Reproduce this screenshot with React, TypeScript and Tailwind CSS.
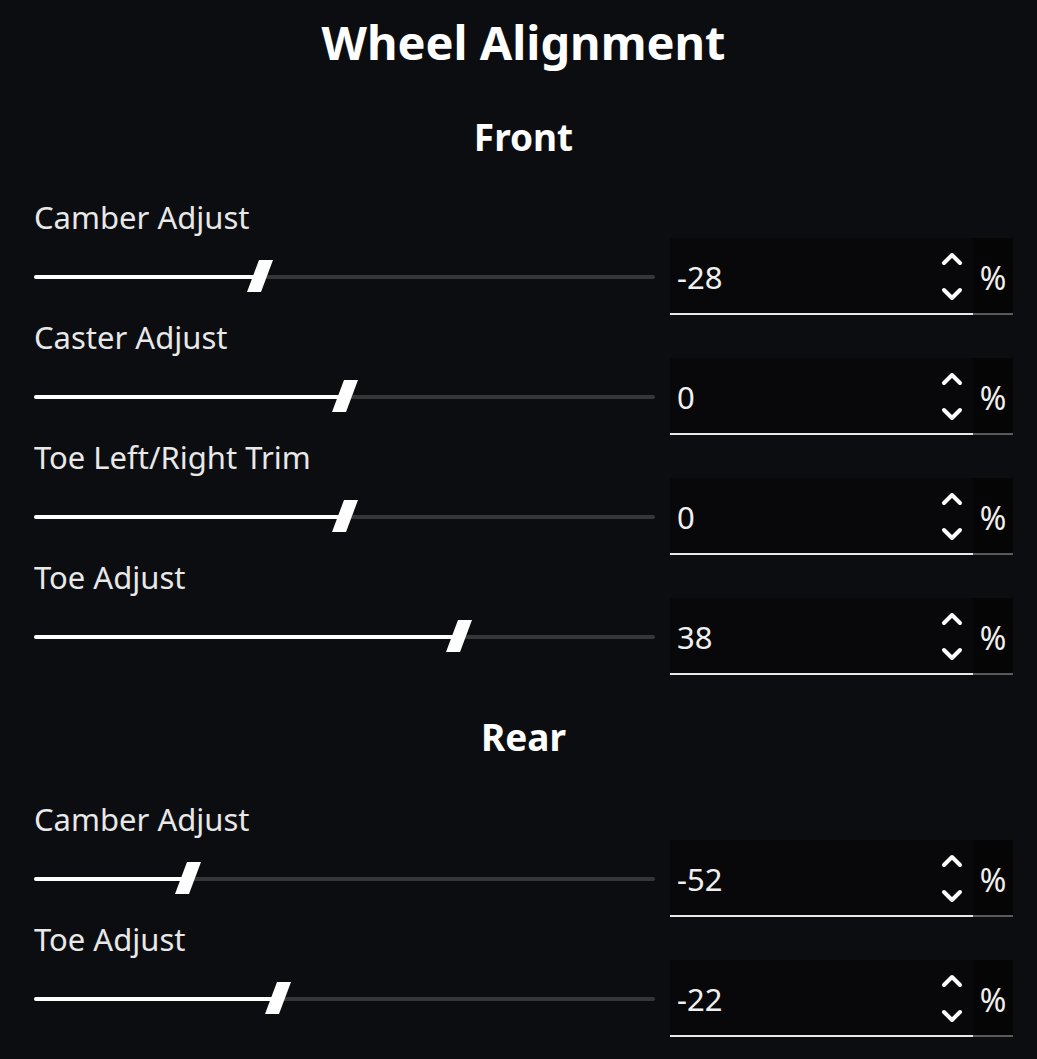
import React from 'react';

interface SliderRowProps {
  label: string;
  value: number;
}

const MIN = -100;
const MAX = 100;

const Thumb: React.FC = () => (
  <svg width="28" height="32" viewBox="0 0 28 32" className="block">
    <polygon points="13,0 27,0 15,32 1,32" fill="#ffffff" />
  </svg>
);

const Chevron: React.FC<{ up?: boolean }> = ({ up }) => (
  <svg width="24" height="14" viewBox="0 0 24 14" className="block">
    <polyline
      points={up ? '4,11 12,3 20,11' : '4,3 12,11 20,3'}
      fill="none"
      stroke="#ffffff"
      strokeWidth="4"
      strokeLinecap="round"
      strokeLinejoin="round"
    />
  </svg>
);

const SliderRow: React.FC<SliderRowProps> = ({ label, value }) => {
  const pct = (value - MIN) / (MAX - MIN);
  return (
    <div className="flex flex-col h-[120px]">
      <div className="h-[36px] leading-[36px] text-[31px] text-[#e8e8e8]">{label}</div>
      <div className="flex items-stretch mt-[3px] h-[77px]">
        <div className="relative flex-1 flex items-center">
          <div className="h-[4px] w-full bg-[#363638] rounded-full" />
          <div
            className="absolute left-0 h-[4px] bg-white rounded-full"
            style={{ width: `calc(10px + ${pct} * (100% - 20px))` }}
          />
          <div
            className="absolute -translate-x-1/2 top-[22px]"
            style={{ left: `calc(10px + ${pct} * (100% - 20px))` }}
          >
            <Thumb />
          </div>
        </div>
        <div className="ml-[15px] w-[343px] flex flex-col">
          <div className="flex flex-1">
            <div className="flex-1 bg-[#08080a] flex items-center justify-between pl-[7px] pr-[9px]">
              <span className="text-[31px] text-[#f0f0f0] pt-[4px]">{value}</span>
              <div className="flex flex-col gap-[21px] pt-[2px]">
                <Chevron up />
                <Chevron />
              </div>
            </div>
            <div className="w-[40px] bg-[#050506] flex items-center justify-center">
              <span className="text-[32px] text-[#f0f0f0] pt-[4px]">%</span>
            </div>
          </div>
          <div className="flex h-[2px]">
            <div className="flex-1 bg-[#e8e8e8]" />
            <div className="w-[40px] bg-[#5a5a5c]" />
          </div>
        </div>
      </div>
    </div>
  );
};

const front = [
  { label: 'Camber Adjust', value: -28 },
  { label: 'Caster Adjust', value: 0 },
  { label: 'Toe Left/Right Trim', value: 0 },
  { label: 'Toe Adjust', value: 38 },
];

const rear = [
  { label: 'Camber Adjust', value: -52 },
  { label: 'Toe Adjust', value: -22 },
];

export default function App() {
  return (
    <div
      className="min-h-[1059px] w-full bg-[#0c0d11] text-white pl-[34px] pr-[24px] pt-[14px]"
      style={{ fontFamily: '"Noto Sans", "Open Sans", sans-serif' }}
    >
      <h1 className="h-[56px] leading-[56px] text-center text-[47px] font-bold">Wheel Alignment</h1>
      <h2 className="mt-[42px] h-[50px] leading-[50px] text-center text-[37px] font-bold">Front</h2>
      <div className="mt-[37px]">
        {front.map((r) => (
          <SliderRow key={r.label} label={r.label} value={r.value} />
        ))}
      </div>
      <h2 className="mt-[33px] h-[50px] leading-[50px] text-center text-[37px] font-bold">Rear</h2>
      <div className="mt-[39px]">
        {rear.map((r) => (
          <SliderRow key={'r' + r.label} label={r.label} value={r.value} />
        ))}
      </div>
    </div>
  );
}
